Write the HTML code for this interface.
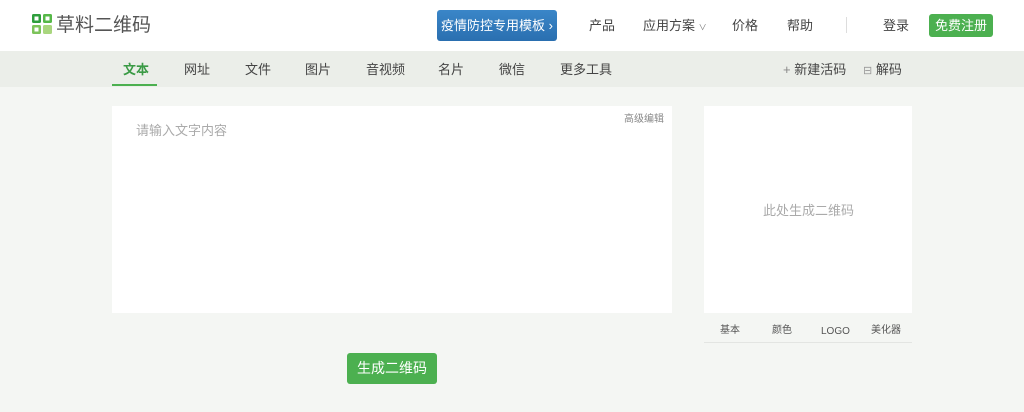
<!DOCTYPE html>
<html><head><meta charset="utf-8"><style>
*{margin:0;padding:0;box-sizing:border-box}
body{width:1024px;height:412px;background:#f4f6f3;font-family:"Liberation Sans","Noto Sans CJK SC",sans-serif;position:relative;overflow:hidden;color:#333}
.a{position:absolute;white-space:nowrap;line-height:1}
.hdr{position:absolute;left:0;top:0;width:1024px;height:51px;background:#fff}
.nav{position:absolute;left:0;top:51px;width:1024px;height:36px;background:#ebeee9}
.n{font-size:13px;color:#444;top:63px}
.h{font-size:13px;color:#444;top:19px}
.t{font-size:10px;color:#555;top:326px}
</style></head><body>
<div class="hdr"></div>
<div class="nav"></div>
<svg class="a" style="left:32px;top:14px" width="21" height="21" viewBox="0 0 21 21">
<rect x="0" y="0" width="9" height="9" rx="1.5" fill="#2e9e3c"/><rect x="2.5" y="2.5" width="4" height="4" fill="#fff"/>
<rect x="11" y="0" width="9" height="9" rx="1.5" fill="#56b848"/><rect x="13.5" y="2.5" width="4" height="4" fill="#fff"/>
<rect x="0" y="11" width="9" height="9" rx="1.5" fill="#7cc35a"/><rect x="2.5" y="13.5" width="4" height="4" fill="#fff"/>
<rect x="11" y="11" width="9" height="9" rx="1.5" fill="#a9d67e"/>
</svg>
<div class="a" style="left:56px;top:16px;font-size:19px;color:#555">草料二维码</div>
<div class="a" style="left:437px;top:10px;width:120px;height:31px;background:linear-gradient(#3a86c8,#2a6fb0);border-radius:3px;color:#fff;font-size:13px;line-height:31px;text-align:center">疫情防控专用模板 ›</div>
<div class="a h" style="left:589px">产品</div>
<div class="a h" style="left:643px">应用方案 <span style="font-size:8px;color:#777">∨</span></div>
<div class="a h" style="left:732px">价格</div>
<div class="a h" style="left:787px">帮助</div>
<div class="a" style="left:846px;top:17px;width:1px;height:16px;background:#ddd"></div>
<div class="a h" style="left:883px">登录</div>
<div class="a" style="left:929px;top:14px;width:64px;height:23px;background:#4cb050;border-radius:3px;color:#fff;font-size:13px;line-height:23px;text-align:center">免费注册</div>
<div class="a n" style="left:123px;color:#3a9a45;font-weight:bold">文本</div>
<div class="a" style="left:112px;top:84px;width:45px;height:2px;background:#4cb050"></div>
<div class="a n" style="left:184px">网址</div>
<div class="a n" style="left:245px">文件</div>
<div class="a n" style="left:305px">图片</div>
<div class="a n" style="left:366px">音视频</div>
<div class="a n" style="left:438px">名片</div>
<div class="a n" style="left:499px">微信</div>
<div class="a n" style="left:560px">更多工具</div>
<div class="a n" style="left:783px"><span style="color:#888">+</span> 新建活码</div>
<div class="a n" style="left:863px"><span style="color:#999;font-size:11px">⊟</span> 解码</div>
<div class="a" style="left:112px;top:106px;width:560px;height:207px;background:#fff"></div>
<div class="a" style="left:136px;top:124px;font-size:13px;color:#aaa">请输入文字内容</div>
<div class="a" style="left:624px;top:115px;font-size:10px;color:#888">高级编辑</div>
<div class="a" style="left:704px;top:106px;width:208px;height:207px;background:#fff"></div>
<div class="a" style="left:763px;top:204px;font-size:13px;color:#aaa">此处生成二维码</div>
<div class="a" style="left:704px;top:342px;width:208px;height:1px;background:#e3e5e2"></div>
<div class="a t" style="left:720px">基本</div>
<div class="a t" style="left:772px">颜色</div>
<div class="a t" style="left:821px;top:327px">LOGO</div>
<div class="a t" style="left:871px">美化器</div>
<div class="a" style="left:347px;top:353px;width:90px;height:31px;background:#4cb050;border-radius:3px;color:#fff;font-size:14px;line-height:31px;text-align:center">生成二维码</div>
</body></html>
